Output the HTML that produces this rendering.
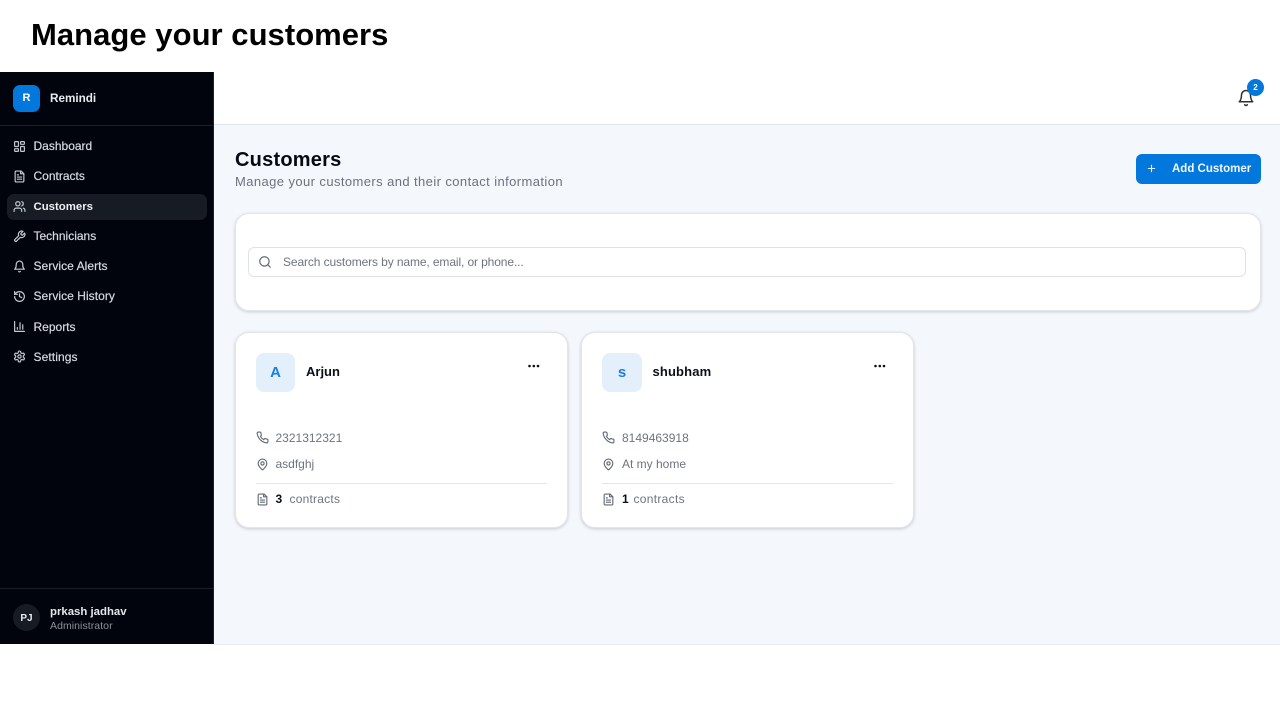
<!DOCTYPE html>
<html><head><meta charset="utf-8"><style>
*{box-sizing:border-box}
html,body{margin:0;padding:0;width:1280px;height:720px;overflow:hidden;background:#fff;font-family:"Liberation Sans",sans-serif}
.t{position:absolute;white-space:nowrap;line-height:1}
svg{position:absolute;fill:none;stroke-linecap:round;stroke-linejoin:round}
.b{position:absolute}
.nav{font-size:12px;color:#d5dae2;left:33.5px;-webkit-text-stroke:.2px #d5dae2}
.nav-i{stroke:#c3c8d0;stroke-width:2.2}
.card{position:absolute;top:332px;width:333px;height:196px;background:#fff;border:1px solid #e2e6ec;border-radius:14px;box-shadow:0 1px 3px rgba(30,40,60,.22)}
.g{font-size:12px;color:#6d7380}
.g-i{stroke:#636a76;stroke-width:2.1}
</style></head><body>
<div class="t" style="left:31px;top:18.5px;font-size:31px;font-weight:700;color:#000;letter-spacing:.04px">Manage your customers</div>

<div class="b" style="left:0;top:72px;width:214px;height:572px;background:#01040c;border-right:1px solid #1c212b"></div>
<div class="b" style="left:214px;top:72px;width:1066px;height:53px;background:#fff;border-bottom:1px solid #dfe4ea"></div>
<div class="b" style="left:214px;top:125px;width:1066px;height:519px;background:#f4f7fb"></div>
<div class="b" style="left:214px;top:644px;width:1066px;height:1px;background:#e8ebef"></div>

<div class="b" style="left:13px;top:85px;width:27px;height:27px;border-radius:7px;background:#0378dc"></div>
<div class="t" style="left:13px;top:93px;width:27px;text-align:center;font-size:11px;font-weight:700;color:#fff">R</div>
<div class="t" style="left:50px;top:93px;font-size:11.7px;font-weight:700;color:#e8ebf0">Remindi</div>
<div class="b" style="left:0;top:125px;width:213px;height:1px;background:#1b1f29"></div>

<div class="b" style="left:7px;top:194px;width:200px;height:26px;border-radius:7px;background:#161b24"></div>

<svg class="nav-i" style="left:13px;top:140px" width="13" height="13" viewBox="0 0 24 24"><rect x="3" y="3" width="7" height="9" rx="1"/><rect x="14" y="3" width="7" height="5" rx="1"/><rect x="14" y="12" width="7" height="9" rx="1"/><rect x="3" y="16" width="7" height="5" rx="1"/></svg>
<div class="t nav" style="top:140px">Dashboard</div>
<svg class="nav-i" style="left:13px;top:170px" width="13" height="13" viewBox="0 0 24 24"><path d="M15 2H6a2 2 0 0 0-2 2v16a2 2 0 0 0 2 2h12a2 2 0 0 0 2-2V7z"/><path d="M14 2v5h6M16 13H8M16 17H8M10 9H8"/></svg>
<div class="t nav" style="top:170px">Contracts</div>
<svg class="nav-i" style="left:13px;top:200px" width="13" height="13" viewBox="0 0 24 24"><path d="M16 21v-2a4 4 0 0 0-4-4H6a4 4 0 0 0-4 4v2"/><circle cx="9" cy="7" r="4"/><path d="M22 21v-2a4 4 0 0 0-3-3.87M16 3.13a4 4 0 0 1 0 7.75"/></svg>
<div class="t nav" style="top:201.5px;font-size:11.4px;color:#eef0f4;font-weight:700;-webkit-text-stroke:0">Customers</div>
<svg class="nav-i" style="left:13px;top:230px" width="13" height="13" viewBox="0 0 24 24"><path d="M14.7 6.3a1 1 0 0 0 0 1.4l1.6 1.6a1 1 0 0 0 1.4 0l3.77-3.77a6 6 0 0 1-7.94 7.94l-6.91 6.91a2.12 2.12 0 0 1-3-3l6.91-6.91a6 6 0 0 1 7.94-7.94z"/></svg>
<div class="t nav" style="top:230px">Technicians</div>
<svg class="nav-i" style="left:13px;top:260px" width="13" height="13" viewBox="0 0 24 24"><path d="M6 8a6 6 0 0 1 12 0c0 7 3 9 3 9H3s3-2 3-9"/><path d="M10.3 21a1.94 1.94 0 0 0 3.4 0"/></svg>
<div class="t nav" style="top:260px;letter-spacing:.05px">Service Alerts</div>
<svg class="nav-i" style="left:13px;top:290px" width="13" height="13" viewBox="0 0 24 24"><path d="M3 12a9 9 0 1 0 9-9 9.75 9.75 0 0 0-6.74 2.74L3 8"/><path d="M3 3v5h5M12 7v5l4 2"/></svg>
<div class="t nav" style="top:290px;letter-spacing:.05px">Service History</div>
<svg class="nav-i" style="left:13px;top:320px" width="13" height="13" viewBox="0 0 24 24"><path d="M3 3v18h18M18 17V9M13 17V5M8 17v-3"/></svg>
<div class="t nav" style="top:321px">Reports</div>
<svg class="nav-i" style="left:13px;top:350px" width="13" height="13" viewBox="0 0 24 24"><path d="M12.22 2h-.44a2 2 0 0 0-2 2v.18a2 2 0 0 1-1 1.73l-.43.25a2 2 0 0 1-2 0l-.15-.08a2 2 0 0 0-2.73.73l-.22.38a2 2 0 0 0 .73 2.73l.15.1a2 2 0 0 1 1 1.72v.51a2 2 0 0 1-1 1.74l-.15.09a2 2 0 0 0-.73 2.73l.22.38a2 2 0 0 0 2.73.73l.15-.08a2 2 0 0 1 2 0l.43.25a2 2 0 0 1 1 1.73V20a2 2 0 0 0 2 2h.44a2 2 0 0 0 2-2v-.18a2 2 0 0 1 1-1.73l.43-.25a2 2 0 0 1 2 0l.15.08a2 2 0 0 0 2.73-.73l.22-.39a2 2 0 0 0-.73-2.73l-.15-.08a2 2 0 0 1-1-1.74v-.5a2 2 0 0 1 1-1.74l.15-.09a2 2 0 0 0 .73-2.73l-.22-.38a2 2 0 0 0-2.73-.73l-.15.08a2 2 0 0 1-2 0l-.43-.25a2 2 0 0 1-1-1.73V4a2 2 0 0 0-2-2z"/><circle cx="12" cy="12" r="3"/></svg>
<div class="t nav" style="top:351px;letter-spacing:.1px">Settings</div>

<div class="b" style="left:0;top:588px;width:213px;height:1px;background:#1b1f29"></div>
<div class="b" style="left:13px;top:604px;width:27px;height:27px;border-radius:50%;background:#161b24"></div>
<div class="t" style="left:13px;top:614px;width:27px;text-align:center;font-size:10px;font-weight:700;color:#e8ebf0">PJ</div>
<div class="t" style="left:50px;top:606.5px;font-size:11.4px;font-weight:700;color:#e4e7ec">prkash jadhav</div>
<div class="t" style="left:50px;top:621px;font-size:10.5px;color:#8b919c;letter-spacing:.06px">Administrator</div>

<svg style="left:1237px;top:89px;stroke:#2b2f36;stroke-width:2" width="18" height="18" viewBox="0 0 24 24"><path d="M6 8a6 6 0 0 1 12 0c0 7 3 9 3 9H3s3-2 3-9"/><path d="M10.3 21a1.94 1.94 0 0 0 3.4 0"/></svg>
<div class="b" style="left:1247px;top:79px;width:17px;height:17px;border-radius:50%;background:#0378dc"></div>
<div class="t" style="left:1247px;top:83.5px;width:17px;text-align:center;font-size:8px;font-weight:700;color:#fff">2</div>

<div class="t" style="left:235px;top:150px;font-size:20px;font-weight:700;color:#060a14;letter-spacing:.22px">Customers</div>
<div class="t" style="left:235px;top:175px;font-size:13px;color:#6b7280;letter-spacing:.41px">Manage your customers and their contact information</div>

<div class="b" style="left:1136px;top:154px;width:125px;height:30px;border-radius:6px;background:#0378dc"></div>
<svg style="left:1146px;top:163px;stroke:#e8f2fc;stroke-width:2.4" width="11" height="11" viewBox="0 0 24 24"><path d="M5 12h14M12 5v14"/></svg>
<div class="t" style="left:1172px;top:164px;font-size:11.5px;font-weight:700;color:#f2f7fd">Add Customer</div>

<div class="b" style="left:235px;top:213px;width:1026px;height:98px;background:#fff;border:1px solid #e2e6ec;border-radius:14px;box-shadow:0 1px 3px rgba(30,40,60,.2)"></div>
<div class="b" style="left:248px;top:247px;width:998px;height:30px;background:#fff;border:1px solid #dfe3e9;border-radius:6px"></div>
<svg class="g-i" style="left:258px;top:255px" width="14" height="14" viewBox="0 0 24 24"><circle cx="11" cy="11" r="8"/><path d="m21 21-4.3-4.3"/></svg>
<div class="t" style="left:283px;top:255.5px;font-size:12px;color:#6d7380;letter-spacing:-.11px">Search customers by name, email, or phone...</div>

<div class="card" style="left:235px"></div>
<div class="b" style="left:256px;top:353px;width:39px;height:39px;border-radius:8px;background:#e3f0fb"></div>
<div class="t" style="left:256px;top:365px;width:39px;text-align:center;font-size:15px;font-weight:700;color:#1b7fdb">A</div>
<div class="t" style="left:306px;top:365px;font-size:13px;font-weight:700;color:#0b0f19">Arjun</div>
<svg style="left:528px;top:362px;fill:#111" width="12" height="8" viewBox="0 0 12 8"><circle cx="1.5" cy="4" r="1.3"/><circle cx="5.8" cy="4" r="1.3"/><circle cx="10" cy="4" r="1.3"/></svg>
<svg class="g-i" style="left:256px;top:431px" width="13" height="13" viewBox="0 0 24 24"><path d="M22 16.92v3a2 2 0 0 1-2.18 2 19.8 19.8 0 0 1-8.63-3.07 19.5 19.5 0 0 1-6-6 19.8 19.8 0 0 1-3.07-8.67A2 2 0 0 1 4.11 2h3a2 2 0 0 1 2 1.72c.13.96.36 1.9.7 2.81a2 2 0 0 1-.45 2.11L8.09 9.91a16 16 0 0 0 6 6l1.27-1.27a2 2 0 0 1 2.11-.45c.91.34 1.85.57 2.81.7A2 2 0 0 1 22 16.92z"/></svg>
<div class="t g" style="left:275.5px;top:432px">2321312321</div>
<svg class="g-i" style="left:256px;top:458px" width="13" height="13" viewBox="0 0 24 24"><path d="M20 10c0 6-8 12-8 12s-8-6-8-12a8 8 0 0 1 16 0z"/><circle cx="12" cy="10" r="3"/></svg>
<div class="t g" style="left:275.5px;top:458px">asdfghj</div>
<div class="b" style="left:256px;top:483px;width:291px;height:1px;background:#e2e5ea"></div>
<svg class="g-i" style="left:256px;top:493px" width="13" height="13" viewBox="0 0 24 24"><path d="M15 2H6a2 2 0 0 0-2 2v16a2 2 0 0 0 2 2h12a2 2 0 0 0 2-2V7z"/><path d="M14 2v5h6M16 13H8M16 17H8M10 9H8"/></svg>
<div class="t" style="left:275.5px;top:493px;font-size:12px;font-weight:700;color:#0b0f19">3</div>
<div class="t g" style="left:289.5px;top:493px;letter-spacing:.22px">contracts</div>

<div class="card" style="left:581px"></div>
<div class="b" style="left:602px;top:353px;width:40px;height:39px;border-radius:8px;background:#e3f0fb"></div>
<div class="t" style="left:602px;top:365px;width:40px;text-align:center;font-size:15px;font-weight:700;color:#1b7fdb">s</div>
<div class="t" style="left:652.5px;top:365px;font-size:13px;font-weight:700;color:#0b0f19;letter-spacing:.15px">shubham</div>
<svg style="left:874px;top:362px;fill:#111" width="12" height="8" viewBox="0 0 12 8"><circle cx="1.5" cy="4" r="1.3"/><circle cx="5.8" cy="4" r="1.3"/><circle cx="10" cy="4" r="1.3"/></svg>
<svg class="g-i" style="left:602px;top:431px" width="13" height="13" viewBox="0 0 24 24"><path d="M22 16.92v3a2 2 0 0 1-2.18 2 19.8 19.8 0 0 1-8.63-3.07 19.5 19.5 0 0 1-6-6 19.8 19.8 0 0 1-3.07-8.67A2 2 0 0 1 4.11 2h3a2 2 0 0 1 2 1.72c.13.96.36 1.9.7 2.81a2 2 0 0 1-.45 2.11L8.09 9.91a16 16 0 0 0 6 6l1.27-1.27a2 2 0 0 1 2.11-.45c.91.34 1.85.57 2.81.7A2 2 0 0 1 22 16.92z"/></svg>
<div class="t g" style="left:622px;top:432px">8149463918</div>
<svg class="g-i" style="left:602px;top:458px" width="13" height="13" viewBox="0 0 24 24"><path d="M20 10c0 6-8 12-8 12s-8-6-8-12a8 8 0 0 1 16 0z"/><circle cx="12" cy="10" r="3"/></svg>
<div class="t g" style="left:622px;top:458px">At my home</div>
<div class="b" style="left:602px;top:483px;width:291px;height:1px;background:#e2e5ea"></div>
<svg class="g-i" style="left:602px;top:493px" width="13" height="13" viewBox="0 0 24 24"><path d="M15 2H6a2 2 0 0 0-2 2v16a2 2 0 0 0 2 2h12a2 2 0 0 0 2-2V7z"/><path d="M14 2v5h6M16 13H8M16 17H8M10 9H8"/></svg>
<div class="t" style="left:622px;top:493px;font-size:12px;font-weight:700;color:#0b0f19">1</div>
<div class="t g" style="left:633.5px;top:493px;letter-spacing:.3px">contracts</div>
</body></html>
